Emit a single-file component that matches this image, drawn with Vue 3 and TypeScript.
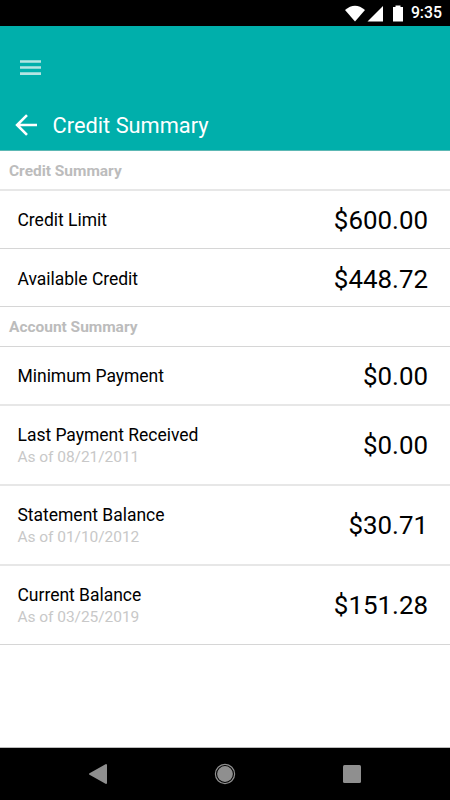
<script setup lang="ts">
interface Row { label: string; amount: string; date?: string; size: string }
interface Section { title: string; line: string; rows: Row[] }
const sections: Section[] = [
  { title: 'Credit Summary', line: 'soft', rows: [
    { label: 'Credit Limit', amount: '$600.00', size: 'short' },
    { label: 'Available Credit', amount: '$448.72', size: 'short lower' },
  ] },
  { title: 'Account Summary', line: 'thin', rows: [
    { label: 'Minimum Payment', amount: '$0.00', size: 'medium soft' },
    { label: 'Last Payment Received', amount: '$0.00', date: '08/21/2011', size: 'tall soft' },
    { label: 'Statement Balance', amount: '$30.71', date: '01/10/2012', size: 'tall soft' },
    { label: 'Current Balance', amount: '$151.28', date: '03/25/2019', size: 'last' },
  ] },
]
</script>

<template>
  <div class="screen">
    <div class="status">
      <svg class="signals" width="60" height="21" viewBox="0 0 60 21" fill="#fff">
        <path d="M0 7Q10 -1.5 20 7L10 18.5Z" />
        <path d="M38 3V18.5H22.5Z" />
        <path d="M48 4H50.5V2.5H55.5V4H58V18.5H48Z" />
      </svg>
      <span class="clock">9:35</span>
    </div>
    <header class="header">
      <div class="menu">
        <svg width="21" height="15" viewBox="0 0 21 15" fill="#b5e5e3"><path d="M0 .2H21V2.7H0ZM0 6.3H21V8.7H0ZM0 12.2H21V14.9H0Z" /></svg>
      </div>
      <div class="titlebar">
        <svg width="22" height="22" viewBox="0 0 22 22" fill="none" stroke="#fff" stroke-width="2.6"><path d="M22 11H2M12 1.1L2.1 11L12 20.9" /></svg>
        <h1>Credit Summary</h1>
      </div>
    </header>
    <main class="content">
      <section v-for="s in sections" :key="s.title">
        <h2 :class="s.line">{{ s.title }}</h2>
        <div v-for="r in s.rows" :key="r.label" class="row" :class="r.size">
          <div class="info">
            <div class="label">{{ r.label }}</div>
            <div v-if="r.date" class="date">As of {{ r.date }}</div>
          </div>
          <div class="amount">{{ r.amount }}</div>
        </div>
      </section>
    </main>
    <nav class="nav">
      <svg width="20" height="22" viewBox="0 0 20 22" fill="#8f8f8f" stroke="#8f8f8f" stroke-linejoin="round" stroke-width="2"><path d="M2 11L18 2V20Z" /></svg>
      <svg width="22" height="22" viewBox="0 0 22 22"><circle cx="11" cy="11" r="9.6" fill="none" stroke="#8f8f8f" stroke-width="1.2" /><circle cx="11" cy="11" r="7.9" fill="#8f8f8f" /></svg>
      <svg width="20" height="22" viewBox="0 0 20 22" fill="#8f8f8f"><rect x="1" y="2" width="18" height="18" rx="1.5" /></svg>
    </nav>
  </div>
</template>

<style>
body { margin: 0; }
</style>
<style scoped>
.screen { width: 450px; height: 800px; display: flex; flex-direction: column; background: #fff; font-family: Roboto, sans-serif; color: #000; overflow: hidden; }
.status { height: 26px; background: #000; display: flex; align-items: center; justify-content: flex-end; padding-right: 8px; box-sizing: border-box; flex: none; }
.signals { margin-right: 6px; }
.clock { color: #fff; font-size: 15.8px; font-weight: 500; line-height: 28px; }
.header { height: 125px; background: #00afab; border-bottom: 1px solid #5cb8b4; box-sizing: border-box; flex: none; }
.menu { height: 74px; padding: 34px 0 0 20px; box-sizing: border-box; }
.menu svg, .titlebar svg { display: block; }
.titlebar { height: 50px; display: flex; align-items: center; padding-left: 15px; gap: 15.6px; }
h1 { margin: 0; padding-top: 2px; font-size: 21.8px; font-weight: 400; color: #fff; line-height: 48px; }
.content { flex: 1; border-bottom: 1px solid #bbb; box-sizing: border-box; }
h2 { margin: 0; height: 40px; line-height: 40px; padding-left: 9px; font-size: 15.5px; letter-spacing: -.02px; font-weight: 700; color: #bcbcbc; box-sizing: border-box; border-bottom: 1px solid #d6d6d6; }
.row { display: flex; align-items: center; justify-content: space-between; padding: 0 22px 0 17.5px; box-sizing: border-box; border-bottom: 1px solid #d6d6d6; }
h2.soft, .row.soft { border-bottom: 2px solid #e7e7e7; }
.short { height: 58px; }
.lower { padding-top: 2px; }
.medium { height: 59px; }
.tall { height: 80px; }
.last { height: 79px; }
.tall .info, .last .info { padding-top: 2px; }
.label { font-size: 17.5px; letter-spacing: -.02px; line-height: 22px; }
.date { font-size: 15.5px; letter-spacing: -.05px; line-height: 22px; color: #c8c8c8; }
.amount { font-size: 25.9px; line-height: 30px; }
.nav { height: 52px; flex: none; background: #000; display: flex; align-items: center; justify-content: space-between; padding: 0 88px; box-sizing: border-box; }
</style>
